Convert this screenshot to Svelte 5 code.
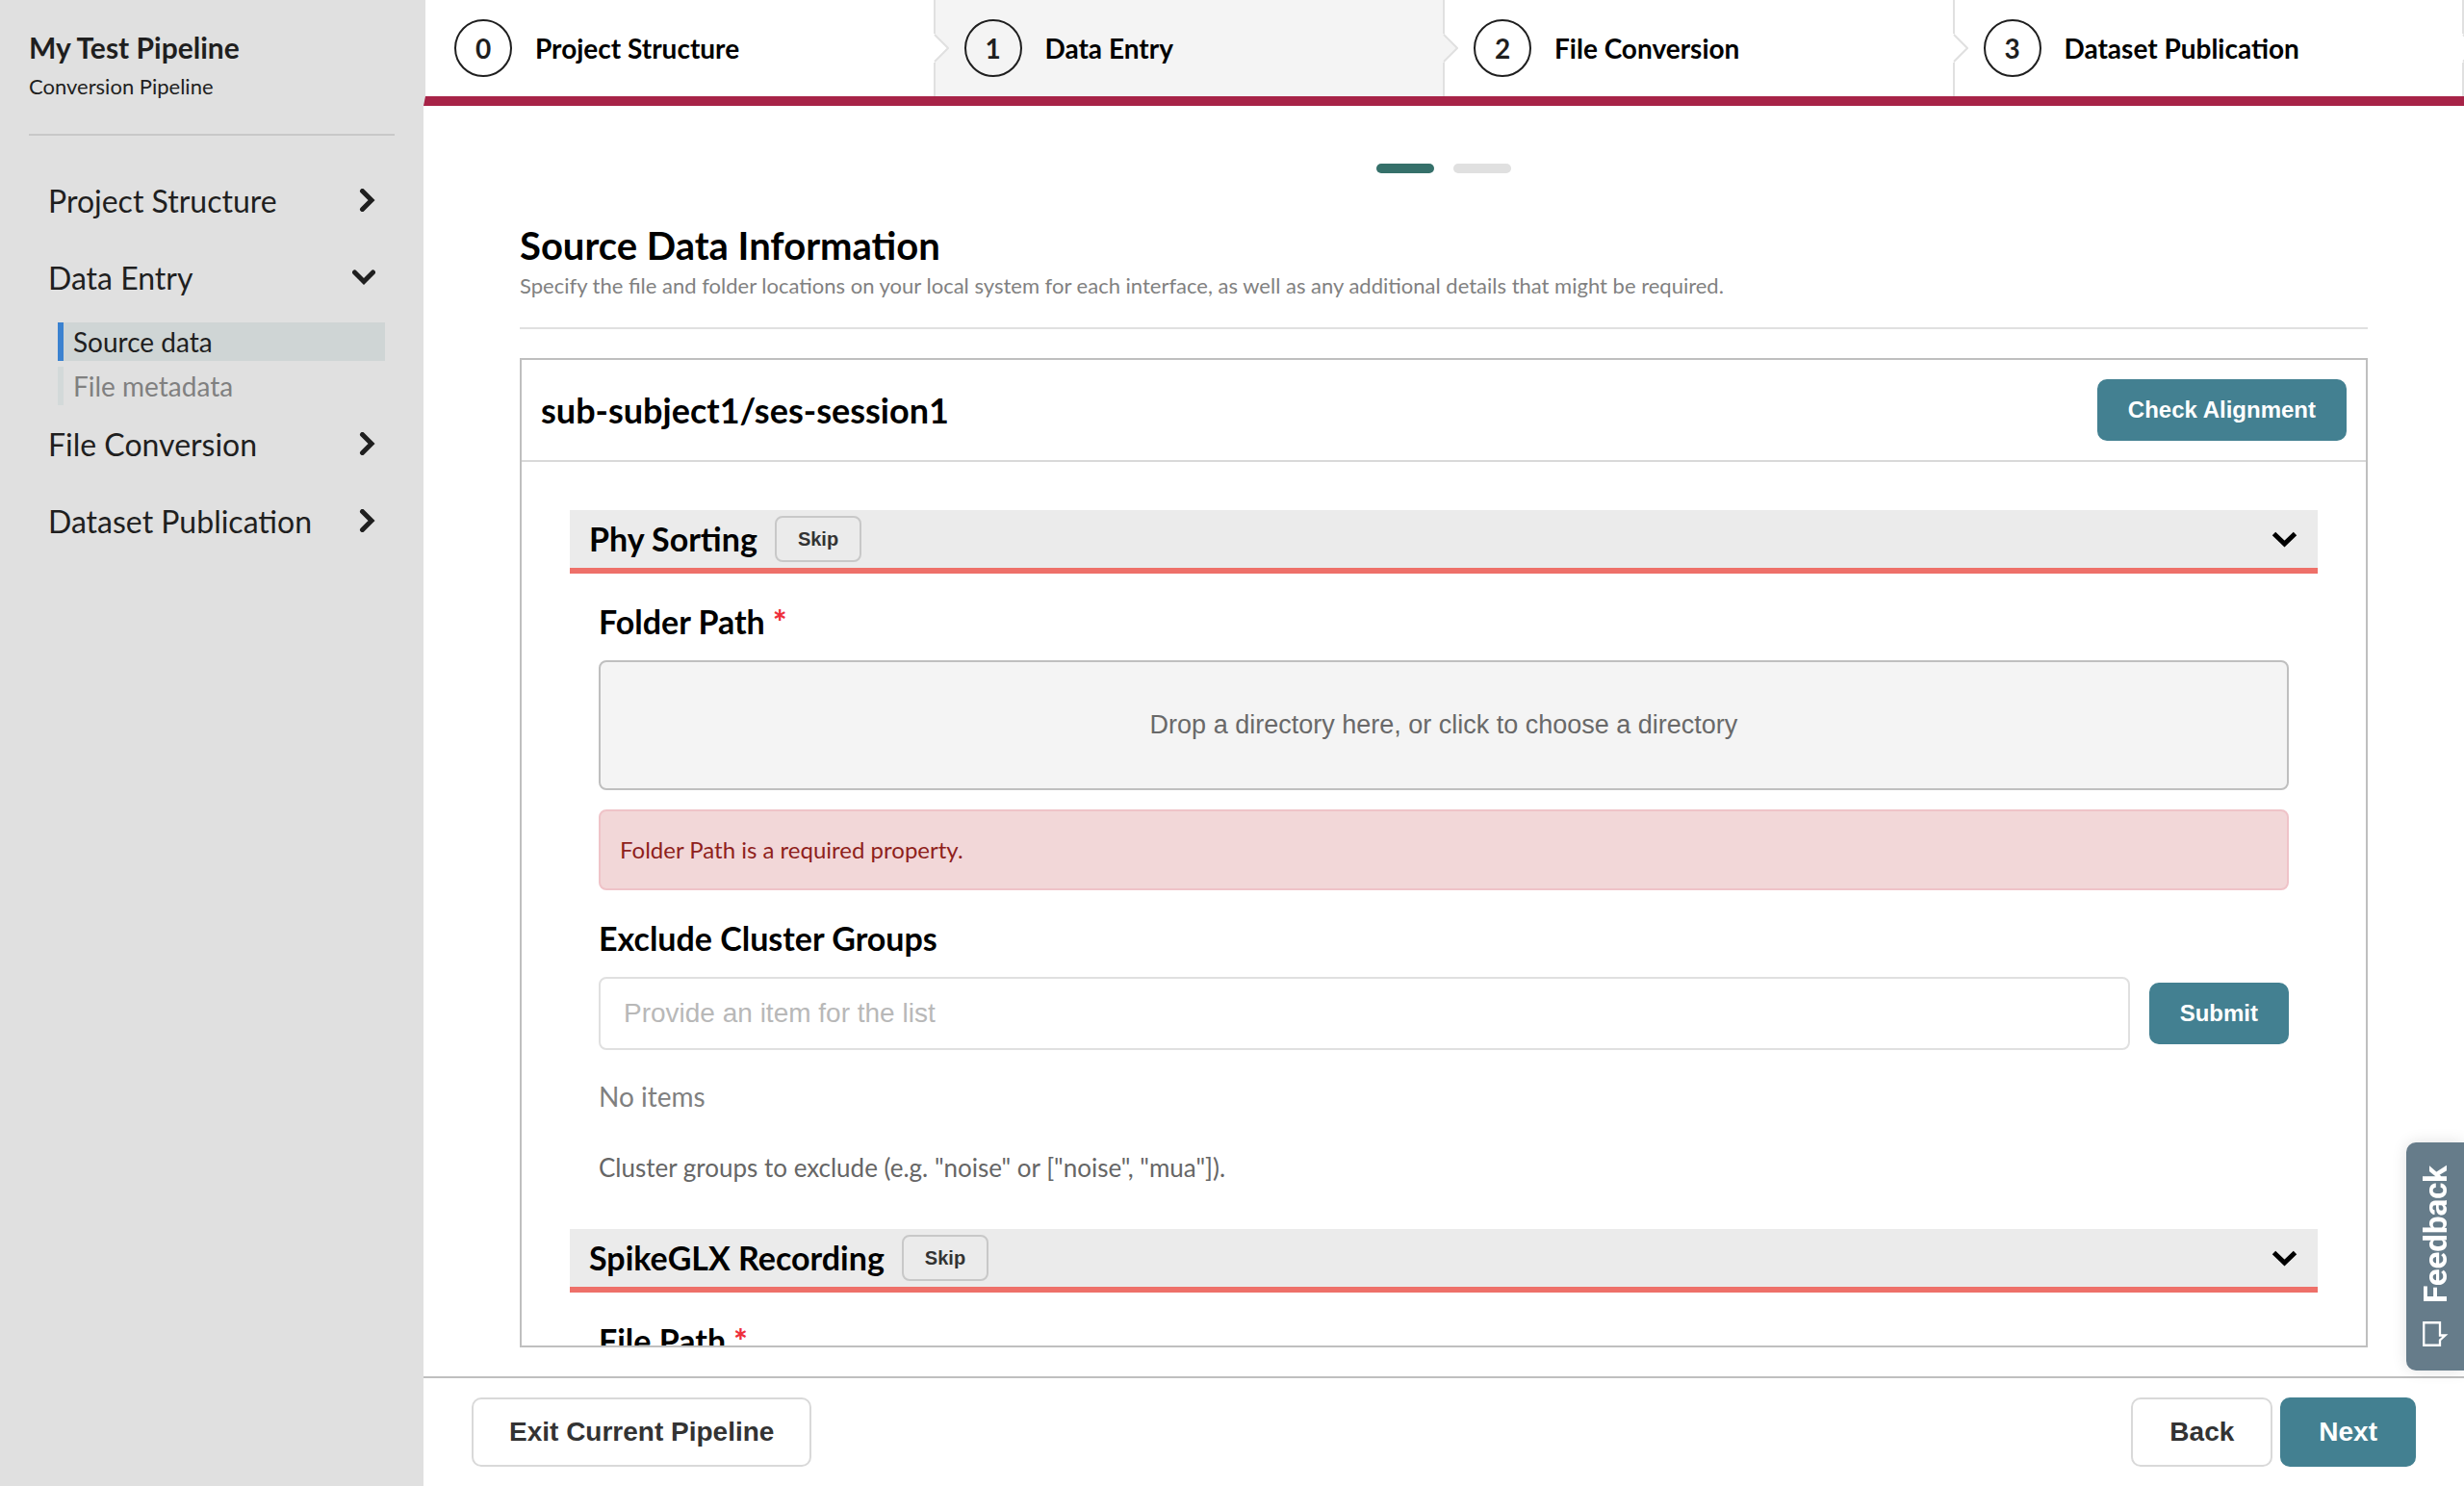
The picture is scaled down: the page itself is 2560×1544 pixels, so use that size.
<script>
  const steps = ['Project Structure', 'Data Entry', 'File Conversion', 'Dataset Publication'];
  const active = 1;
  const pages = ['Source data', 'File metadata'];
</script>

{#snippet skipHeader(title)}
  <header class="section-head">
    <h3>{title}</h3>
    <button class="skip" type="button">Skip</button>
    <button class="toggle" type="button" aria-label="Toggle {title}">
      <svg width="28" height="20" viewBox="0 0 28 20"><path d="M2.500 4.500 13.500 15 24.500 4.500" fill="none" stroke="#000" stroke-width="5" /></svg>
    </button>
  </header>
{/snippet}

<div class="app">
  <aside>
    <div class="brand">
      <h1>My Test Pipeline</h1>
      <p>Conversion Pipeline</p>
    </div>
    <nav aria-label="Pipeline sections">
      {#each steps as step, i}
        <button class="group" type="button" aria-expanded={i === active}>
          <span>{step}</span>
          {#if i === active}
            <svg width="24" height="24" viewBox="0 0 24 24"><path d="M2.500 7 12 16.500 21.500 7" /></svg>
          {:else}
            <svg width="24" height="24" viewBox="0 0 24 24"><path d="M10.500 2.500 20 12 10.500 21.500" /></svg>
          {/if}
        </button>
        {#if i === active}
          <ul>
            {#each pages as page, p}
              <li><a href="#page-{p}" class:current={p === 0}>{page}</a></li>
            {/each}
          </ul>
        {/if}
      {/each}
    </nav>
  </aside>

  <main>
    <ol class="steps">
      {#each steps as step, i}
        <li class:active={i === active}>
          <a href="#step-{i}"><span class="num">{i}</span><span>{step}</span></a>
          <svg class="arrow" width="16" height="30" viewBox="0 0 16 30"><path d="M0 0 1 0 15 15 1 30 0 30Z" stroke="none" /><path d="M1 1 15 15 1 29" fill="none" /></svg>
        </li>
      {/each}
    </ol>

    <div class="content">
      <div class="pills"><span class="on"></span><span></span></div>
      <div class="title">
        <h2>Source Data Information</h2>
        <p>Specify the file and folder locations on your local system for each interface, as well as any additional details that might be required.</p>
      </div>

      <section class="panel">
        <header class="panel-head">
          <h2>sub-subject1/ses-session1</h2>
          <button class="primary small" type="button">Check Alignment</button>
        </header>
        <div class="panel-body">
          {@render skipHeader('Phy Sorting')}
          <div class="fields">
            <h4 id="folder-label">Folder Path <span class="req">*</span></h4>
            <button class="drop" type="button" aria-describedby="folder-label">Drop a directory here, or click to choose a directory</button>
            <p class="error" role="alert">Folder Path is a required property.</p>
            <label for="groups">Exclude Cluster Groups</label>
            <div class="entry">
              <input id="groups" type="text" placeholder="Provide an item for the list" />
              <button class="primary small" type="button">Submit</button>
            </div>
            <p class="empty">No items</p>
            <p class="hint">Cluster groups to exclude (e.g. "noise" or ["noise", "mua"]).</p>
          </div>
          {@render skipHeader('SpikeGLX Recording')}
          <div class="fields">
            <h4>File Path <span class="req">*</span></h4>
          </div>
        </div>
      </section>
    </div>

    <footer>
      <button class="plain exit" type="button">Exit Current Pipeline</button>
      <div class="pair">
        <button class="plain" type="button">Back</button>
        <button class="primary" type="button">Next</button>
      </div>
    </footer>
  </main>

  <button class="feedback" type="button">
    <span>Feedback</span>
    <svg width="28" height="28" viewBox="0 0 28 28"><path d="M2.250 2.250H19V15.500H24.500L19 20.500V25.750H2.250Z" fill="none" stroke="#fff" stroke-width="2.300" /></svg>
  </button>
</div>

<style>
  :global(body) { background: #fff; }
  .app, .app * { box-sizing: border-box; }
  h1, h2, h3, h4, p, ul, ol { margin: 0; padding: 0; }
  ul, ol { list-style: none; }
  a { color: inherit; text-decoration: none; }
  button, input { font-family: "Liberation Sans", Arial, sans-serif; }
  button { cursor: pointer; }

  .app {
    display: grid;
    grid-template-columns: 440px minmax(0, 1fr);
    height: 100vh;
    overflow: hidden;
    font-family: Lato, sans-serif;
    color: #000;
  }

  aside { padding: 30px; background: #e0e0e0; color: #1f1f1f; }
  .brand { padding-bottom: 35px; border-bottom: 2px solid #c8c8c8; }
  h1 { font-size: 30px; line-height: 38px; }
  .brand p { font-size: 22px; line-height: 28px; padding-top: 8px; }
  nav { padding-top: 27px; }
  .group {
    display: flex;
    justify-content: space-between;
    align-items: center;
    width: 100%;
    height: 80px;
    padding: 0 20px;
    border: 0;
    background: none;
    color: inherit;
    font-family: inherit;
    font-size: 32px;
  }
  .group path { fill: none; stroke: #1f1f1f; stroke-width: 5; stroke-linecap: round; stroke-linejoin: miter; }
  nav ul { display: grid; gap: 6px; padding: 7px 10px 0 30px; }
  nav li a {
    display: block;
    padding-left: 10px;
    border-left: 6px solid #d3d9d9;
    font-size: 28px;
    line-height: 40px;
    color: #808080;
  }
  nav li a.current { border-color: #3b82d0; background: #cfd5d5; color: #1f1f1f; }

  main { display: flex; flex-direction: column; min-height: 0; height: 100vh; }
  .steps {
    display: grid;
    grid-template-columns: repeat(4, 1fr);
    flex: none;
    height: 110px;
    border-left: 2px solid #e0e0e0;
    border-bottom: 10px solid #a72347;
    overflow: hidden;
  }
  .steps li { position: relative; border-right: 2px solid #e0e0e0; background: #fff; }
  .steps li.active { background: #f4f4f4; }
  .steps a { display: flex; align-items: center; gap: 24px; height: 100px; padding-left: 30px; font-size: 28px; font-weight: 700; }
  .num { display: grid; place-items: center; width: 60px; height: 60px; border: 2px solid #1f1f1f; border-radius: 50%; color: #1f1f1f; }
  .arrow { position: absolute; z-index: 1; right: -16px; top: 35px; fill: #fff; stroke: #e0e0e0; stroke-width: 2; }
  .active .arrow { fill: #f4f4f4; }

  .content { display: flex; flex-direction: column; flex: 1; min-height: 0; padding: 60px 100px 30px; }
  .pills { display: flex; justify-content: center; gap: 20px; }
  .pills span { width: 60px; height: 10px; border-radius: 5px; background: #e0e0e0; }
  .pills .on { background: #35706a; }
  .title { padding: 51px 0 27px; border-bottom: 2px solid #e0e0e0; }
  .title h2 { font-size: 40px; line-height: 48px; }
  .title p { font-size: 22px; line-height: 32px; padding-top: 2px; color: #818181; }

  .panel { display: flex; flex-direction: column; flex: 1; min-height: 0; margin-top: 30px; border: 2px solid #bfbfbf; }
  .panel-head { display: flex; flex: none; justify-content: space-between; align-items: center; padding: 20px; border-bottom: 2px solid #d9d9d9; }
  .panel-head h2 { font-size: 36px; line-height: 44px; }
  .panel-body { flex: 1; min-height: 0; overflow: hidden; padding: 50px 50px 0; }

  .section-head { display: flex; align-items: center; height: 66px; padding: 0 20px; border-bottom: 6px solid #ee7069; background: #ebebeb; }
  h3, h4, label { font-size: 34px; line-height: 40px; font-weight: 700; }
  .skip { height: 48px; margin-left: 18px; padding: 0 22px; border: 2px solid #c8c8c8; border-radius: 8px; background: none; color: #333; font-size: 20px; font-weight: 700; }
  .toggle { display: flex; margin-left: auto; padding: 0; border: 0; background: none; }

  .fields { display: flex; flex-direction: column; padding: 30px 30px 48px; }
  .req { color: #ee2f3b; font-weight: 900; }
  .drop { height: 135px; margin-top: 20px; border: 2px solid #bfbfbf; border-radius: 8px; background: #f4f4f4; color: #696969; font-size: 27px; }
  .error { margin: 20px 0 30px; padding: 24px 20px; border: 2px solid #efc3c8; border-radius: 8px; background: #f2d7d8; color: #8f1f1c; font-size: 24px; line-height: 32px; }
  .entry { display: flex; align-items: center; gap: 20px; margin-top: 20px; }
  input { flex: 1; min-width: 0; height: 76px; padding: 0 24px; border: 2px solid #e0e0e0; border-radius: 8px; font-size: 28px; }
  input::placeholder { color: #b8b8b8; }
  .empty { margin-top: 30px; font-size: 28px; line-height: 36px; color: #808080; }
  .hint { margin-top: 40px; font-size: 26px; line-height: 32px; color: #666; }

  .primary, .plain { height: 72px; padding: 0 38px; border: 2px solid #d9d9d9; border-radius: 10px; background: #fff; color: #333; font-size: 28px; font-weight: 700; }
  .plain.exit { padding: 0 37px; }
  .primary { border-color: #438091; background: #438091; color: #fff; }
  .primary.small { height: 64px; padding: 0 30px; font-size: 24px; }
  footer { display: flex; flex: none; justify-content: space-between; padding: 20px 50px; border-top: 2px solid #bfbfbf; }
  .pair { display: flex; gap: 8px; }

  .feedback {
    position: fixed;
    right: 0;
    bottom: 120px;
    display: flex;
    flex-direction: column;
    align-items: center;
    gap: 18px;
    width: 60px;
    padding: 24px 0;
    border: 0;
    border-radius: 10px 0 0 10px;
    background: #667c8a;
    color: #fff;
    font-family: Roboto, sans-serif;
    font-size: 33px;
    font-weight: 700;
    box-shadow: 0 0 16px rgba(0, 0, 0, 0.12);
  }
  .feedback span { writing-mode: vertical-rl; transform: rotate(180deg); }
</style>
